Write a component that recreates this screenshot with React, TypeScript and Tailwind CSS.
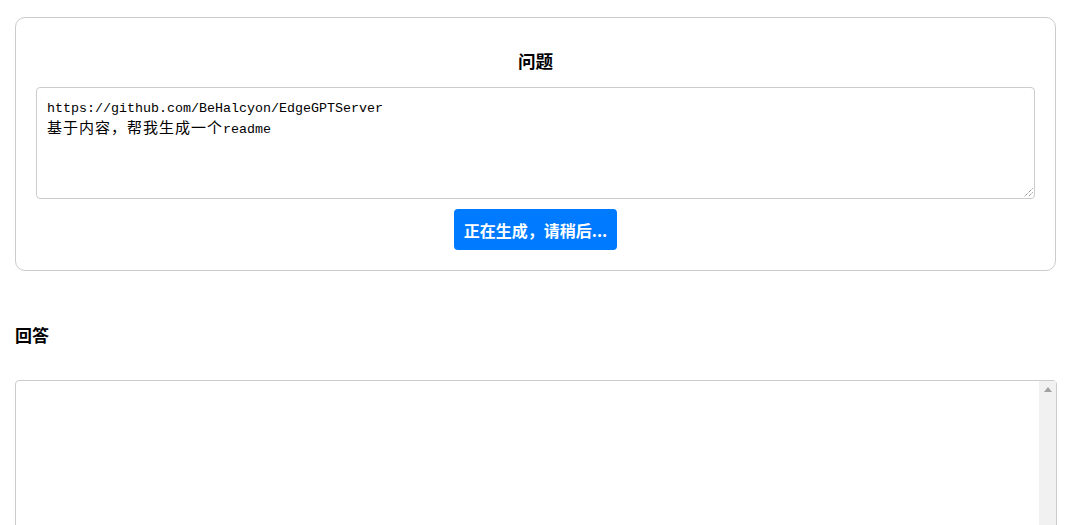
import React from "react";

export default function App() {
  const mono = '"Liberation Mono", "Noto Sans CJK SC", monospace';
  return (
    <div className="w-[1076px] bg-white pt-[17px] text-black" style={{ fontFamily: '"Noto Sans CJK SC", "Noto Sans", sans-serif' }}>
      <div className="mx-[15px] w-[1041px] rounded-[10px] border border-[#cccccc] px-[20px] pb-[20px] pt-[30px] flex flex-col items-center">
        <div className="h-[26px] text-[17.6px] font-bold leading-[26px]">问题</div>
        <div
          className="relative mt-[13px] h-[112px] w-full rounded-[4px] border border-[#cccccc] px-[10px] pt-[12px] text-[13.33px] leading-[18px]"
          style={{ fontFamily: mono }}
        >
          <div>https://github.com/BeHalcyon/EdgeGPTServer</div>
          <div>
            <span className="text-[15px] tracking-[1px]" style={{ fontFamily: '"Noto Sans CJK SC", sans-serif' }}>
              基于内容，帮我生成一个
            </span>
            <span>readme</span>
          </div>
          <svg className="absolute bottom-[1px] right-[1px]" width="10" height="10" viewBox="0 0 10 10">
            <line x1="9.5" y1="1.5" x2="1.5" y2="9.5" stroke="#666" strokeWidth="1" strokeDasharray="1 1" />
            <line x1="9.5" y1="5.5" x2="5.5" y2="9.5" stroke="#666" strokeWidth="1" strokeDasharray="1 1" />
          </svg>
        </div>
        <button className="mt-[10px] h-[41px] rounded-[4px] bg-[#007bff] px-[10px] text-[16px] font-bold text-white">
          正在生成，请稍后...
        </button>
      </div>
      <div className="mx-[15px] mt-[51px] h-[26px] text-[17px] font-bold leading-[26px]">回答</div>
      <div className="mx-[15px] mt-[32px] flex h-[220px] w-[1042px] rounded-tl-[4px] rounded-tr-[4px] border border-[#cccccc]">
        <div className="flex-1"></div>
        <div className="flex w-[17px] justify-center bg-[#f1f1f1] pt-[6px]">
          <svg width="8" height="5" viewBox="0 0 8 5">
            <polygon points="4,0 8,5 0,5" fill="#a3a3a3" />
          </svg>
        </div>
      </div>
    </div>
  );
}
